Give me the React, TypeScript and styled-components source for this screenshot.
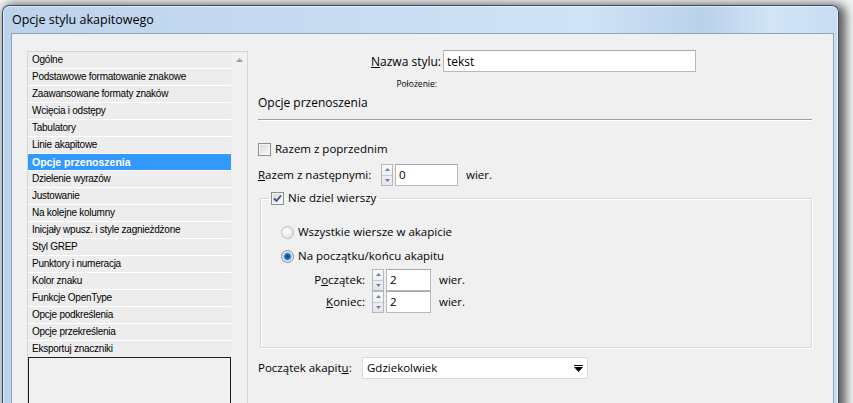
import React from 'react';
import styled, { createGlobalStyle } from 'styled-components';

const GlobalStyle = createGlobalStyle`
  html, body {
    margin: 0;
    padding: 0;
    overflow: hidden;
    background: #f1f2f3;
  }
`;

const UI_FONT = `"Open Sans", "Liberation Sans", sans-serif`;
const LIST_FONT = `"Liberation Sans", Arial, sans-serif`;

const Desktop = styled.div`
  width: 853px;
  height: 403px;
  box-sizing: border-box;
  padding: 5px 0 0 2px;
  overflow: hidden;
  background: #f1f2f3;
`;

const Window = styled.div`
  width: 837px;
  height: 440px;
  box-sizing: border-box;
  border: 1px solid #3e4d5e;
  border-bottom: none;
  border-radius: 7px 7px 0 0;
  padding: 0 4px 0 8px;
  display: flex;
  flex-direction: column;
  background: linear-gradient(
    to right,
    #bcd3ec 0%,
    #c6dbf1 35%,
    #d0e3f6 70%,
    #b9d1eb 84%,
    #d2e4f6 92%,
    #c8dcf2 100%
  );
  box-shadow: 4px 2px 10px 3px rgba(0, 0, 0, 0.6),
    inset 0 0 0 1px rgba(255, 255, 255, 0.55);
`;

const TitleBar = styled.div`
  flex: none;
  height: 27px;
  display: flex;
  align-items: center;
  padding-left: 1px;
  font-family: ${UI_FONT};
  font-size: 12.5px;
  color: #000;
`;

const Client = styled.div`
  flex: 1;
  min-height: 0;
  overflow: hidden;
  display: flex;
  align-items: flex-start;
  padding: 16px 0 0 15px;
  background: #f0f0f0;
  border: 1px solid #8ea3ba;
  border-bottom: none;
`;

const ListBox = styled.div`
  flex: none;
  margin-top: 1px;
  width: 221px;
  height: 400px;
  box-sizing: border-box;
  display: flex;
  border: 1px solid #d6d6d6;
  border-bottom: none;
`;

const ItemsColumn = styled.div`
  width: 203px;
  display: flex;
  flex-direction: column;
`;

const ListRow = styled.div<{ $selected?: boolean }>`
  height: 16px;
  line-height: 16px;
  padding-left: 4px;
  border-bottom: 1px solid #ffffff;
  background: ${(p) => (p.$selected ? '#3399ff' : '#ededed')};
  color: ${(p) => (p.$selected ? '#ffffff' : '#000000')};
  font-family: ${LIST_FONT};
  font-size: ${(p) => (p.$selected ? '10.5px' : '10px')};
  font-weight: ${(p) => (p.$selected ? 700 : 400)};
  letter-spacing: ${(p) => (p.$selected ? '0' : '-0.25px')};
  white-space: nowrap;
`;

const EmptyBox = styled.div`
  margin-top: -1px;
  height: 80px;
  border: 1px solid #1e1e1e;
  background: #f0f0f0;
`;

const ScrollColumn = styled.div`
  flex: 1;
  display: flex;
  justify-content: center;
  padding-top: 6px;
  background: #f0f0f0;
`;

const Panel = styled.div`
  margin-left: 10px;
  width: 554px;
  display: flex;
  flex-direction: column;
  font-family: ${UI_FONT};
  font-size: 11.5px;
  color: #000;
`;

const NameRow = styled.div`
  display: flex;
  align-items: center;
  padding-left: 111px;
  font-size: 12px;
`;

const NameLabel = styled.label`
  width: 72px;
  margin-right: 2px;
  text-align: right;
  white-space: nowrap;
`;

const TextBox = styled.div<{ $width: number }>`
  width: ${(p) => p.$width}px;
  height: 22px;
  box-sizing: border-box;
  flex: none;
  display: flex;
  align-items: center;
  padding-left: 3px;
  background: #fff;
  border: 1px solid #b5b8bf;
  border-top-color: #a4a7ad;
  white-space: nowrap;
`;

const LocationRow = styled.div`
  margin-top: 6px;
  padding-left: 111px;
`;

const LocationLabel = styled.div`
  width: 68px;
  text-align: right;
  font-size: 8.5px;
  line-height: 11px;
`;

const SectionTitle = styled.div`
  margin-top: 6px;
  line-height: 16px;
  font-size: 12px;
`;

const Separator = styled.div`
  margin-top: 8px;
  border-top: 1px solid #a0a0a0;
  border-bottom: 1px solid #ffffff;
`;

const Row = styled.div<{ $top: number }>`
  margin-top: ${(p) => p.$top}px;
  display: flex;
  align-items: center;
  white-space: nowrap;
  line-height: 16px;
`;

const FieldLabel = styled.span<{ $width: number; $right?: boolean }>`
  width: ${(p) => p.$width}px;
  flex: none;
  text-align: ${(p) => (p.$right ? 'right' : 'left')};
`;

const Unit = styled.span`
  margin-left: 8px;
`;

const CheckBox = styled.span`
  width: 13px;
  height: 13px;
  box-sizing: border-box;
  flex: none;
  display: inline-flex;
  align-items: center;
  justify-content: center;
  border: 1px solid #8e8f8f;
  background: linear-gradient(135deg, #d3d6da 0%, #eceef0 60%, #fbfbfb 100%);
  box-shadow: inset 0 0 0 1px #f4f4f4;
  margin-right: 4px;
`;

const Radio = styled.span<{ $checked?: boolean }>`
  width: 13px;
  height: 13px;
  box-sizing: border-box;
  flex: none;
  border-radius: 50%;
  border: 1px solid ${(p) => (p.$checked ? '#7d8a99' : '#b9bdc2')};
  background: ${(p) =>
    p.$checked
      ? 'radial-gradient(circle at 50% 50%, #1f4f9a 0 2px, #4f8fd8 3px, #8fc0ee 4px, #eef2f6 4.6px, #f2f3f4 100%)'
      : 'radial-gradient(circle at 40% 40%, #fdfdfd 0, #e4e6e8 70%, #d3d6d9 100%)'};
  margin-right: 4px;
`;

const SpinBox = styled.span`
  width: 12px;
  height: 22px;
  box-sizing: border-box;
  flex: none;
  display: flex;
  flex-direction: column;
  border: 1px solid #b4b7bd;
  background: linear-gradient(to bottom, #fafafa, #e4e6ea);
  margin-right: 2px;
`;

const SpinHalf = styled.span<{ $down?: boolean }>`
  flex: 1;
  display: flex;
  align-items: center;
  justify-content: center;
  ${(p) => (p.$down ? 'border-top: 1px solid #c6c9ce;' : '')}
`;

const GroupBox = styled.fieldset`
  margin: 4px 0 0 2px;
  padding: 0 0 34px 0;
  border: 1px solid #d3d9de;
  box-shadow: inset 1px 1px 0 #ffffff, 1px 1px 0 #ffffff;
`;

const Legend = styled.legend`
  margin-left: 8px;
  padding: 0 3px 0 2px;
  display: flex;
  align-items: center;
  line-height: 16px;
`;

const GroupBody = styled.div`
  padding: 18px 0 0 20px;
  display: flex;
  flex-direction: column;
`;

const Select = styled.div`
  width: 226px;
  height: 22px;
  box-sizing: border-box;
  display: flex;
  align-items: center;
  justify-content: space-between;
  padding: 0 4px 0 4px;
  background: #fff;
  border: 1px solid #dadada;
`;

const U = styled.span`
  text-decoration: underline;
`;

const UpArrow = () => (
  <svg width="7" height="4" viewBox="0 0 7 4">
    <path d="M0 4 L3.5 0 L7 4 Z" fill="#9aa0a8" />
  </svg>
);

const SpinArrow = ({ down }: { down?: boolean }) => (
  <svg width="5" height="3" viewBox="0 0 5 3">
    <path d={down ? 'M0 0 L5 0 L2.5 3 Z' : 'M0 3 L5 3 L2.5 0 Z'} fill="#6d7f98" />
  </svg>
);

const CheckMark = () => (
  <svg width="9" height="9" viewBox="0 0 9 9">
    <path
      d="M1 4.5 L3.5 7 L8 1.5"
      fill="none"
      stroke="#3b4f8c"
      strokeWidth="1.8"
    />
  </svg>
);

const DropArrow = () => (
  <svg width="9" height="7" viewBox="0 0 9 7">
    <rect x="0" y="0" width="9" height="1" fill="#000" />
    <path d="M0 2 L9 2 L4.5 7 Z" fill="#000" />
  </svg>
);

const Spinner = () => (
  <SpinBox>
    <SpinHalf>
      <SpinArrow />
    </SpinHalf>
    <SpinHalf $down>
      <SpinArrow down />
    </SpinHalf>
  </SpinBox>
);

const categories = [
  'Ogólne',
  'Podstawowe formatowanie znakowe',
  'Zaawansowane formaty znaków',
  'Wcięcia i odstępy',
  'Tabulatory',
  'Linie akapitowe',
  'Opcje przenoszenia',
  'Dzielenie wyrazów',
  'Justowanie',
  'Na kolejne kolumny',
  'Inicjały wpusz. i style zagnieżdżone',
  'Styl GREP',
  'Punktory i numeracja',
  'Kolor znaku',
  'Funkcje OpenType',
  'Opcje podkreślenia',
  'Opcje przekreślenia',
  'Eksportuj znaczniki',
];

export default function App() {
  return (
    <Desktop>
      <GlobalStyle />
      <Window>
        <TitleBar>Opcje stylu akapitowego</TitleBar>
        <Client>
          <ListBox>
            <ItemsColumn>
              {categories.map((c) => (
                <ListRow key={c} $selected={c === 'Opcje przenoszenia'}>
                  {c}
                </ListRow>
              ))}
              <EmptyBox />
            </ItemsColumn>
            <ScrollColumn>
              <UpArrow />
            </ScrollColumn>
          </ListBox>

          <Panel>
            <NameRow>
              <NameLabel>
                <U>N</U>azwa stylu:
              </NameLabel>
              <TextBox $width={253}>tekst</TextBox>
            </NameRow>
            <LocationRow>
              <LocationLabel>Położenie:</LocationLabel>
            </LocationRow>
            <SectionTitle>Opcje przenoszenia</SectionTitle>
            <Separator />

            <Row $top={20}>
              <CheckBox />
              Razem z poprzednim
            </Row>
            <Row $top={7}>
              <FieldLabel $width={123}>
                <U>R</U>azem z następnymi:
              </FieldLabel>
              <Spinner />
              <TextBox $width={63}>0</TextBox>
              <Unit>wier.</Unit>
            </Row>

            <GroupBox>
              <Legend>
                <CheckBox>
                  <CheckMark />
                </CheckBox>
                Nie dziel wierszy
              </Legend>
              <GroupBody>
                <Row $top={0}>
                  <Radio />
                  Wszystkie wiersze w akapicie
                </Row>
                <Row $top={8}>
                  <Radio $checked />
                  Na początku/końcu akapitu
                </Row>
                <Row $top={5}>
                  <FieldLabel $width={84} $right>
                    P<U>o</U>czątek:
                  </FieldLabel>
                  <FieldLabel $width={7} />
                  <Spinner />
                  <TextBox $width={45}>2</TextBox>
                  <Unit>wier.</Unit>
                </Row>
                <Row $top={0}>
                  <FieldLabel $width={84} $right>
                    <U>K</U>oniec:
                  </FieldLabel>
                  <FieldLabel $width={7} />
                  <Spinner />
                  <TextBox $width={45}>2</TextBox>
                  <Unit>wier.</Unit>
                </Row>
              </GroupBody>
            </GroupBox>

            <Row $top={9}>
              <FieldLabel $width={104}>
                Początek akapit<U>u</U>:
              </FieldLabel>
              <Select>
                Gdziekolwiek
                <DropArrow />
              </Select>
            </Row>
          </Panel>
        </Client>
      </Window>
    </Desktop>
  );
}
